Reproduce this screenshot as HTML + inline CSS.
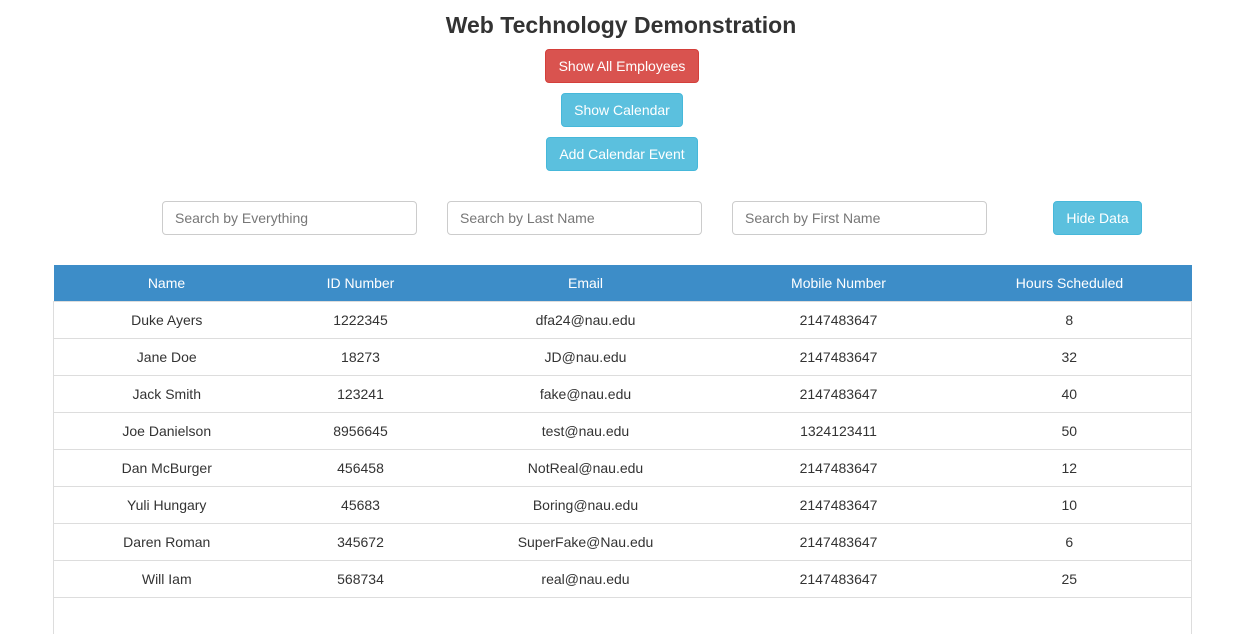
<!DOCTYPE html>
<html><head><style>
body{margin:0;background:#fff;font-family:"Liberation Sans",Arial,sans-serif;color:#333;width:1246px;height:602px;overflow:hidden;position:relative}
.a{position:absolute;box-sizing:border-box}
h1{position:absolute;left:0;width:1242px;text-align:center;top:12px;margin:0;font-size:23px;font-weight:bold;color:#333}
.btn{position:absolute;box-sizing:border-box;color:#fff;font-size:14px;text-align:center;border-radius:4px;line-height:33px}
.r{background:#d9534f;border:1px solid #d43f3a}
.b{background:#5bc0de;border:1px solid #46b8da}
.in{border:1px solid #ccc;border-radius:4px;height:34px;width:255px;top:201px;font-size:14px;color:#777;padding-left:12px;line-height:33px}
table{position:absolute;left:53px;top:265px;width:1138px;border-collapse:collapse;font-size:14px;table-layout:fixed}
th{background:#3d8dc8;color:#fff;font-weight:normal;height:36px;padding:0}
td{height:36px;padding:0;text-align:center;border-top:1px solid #ddd}
tbody{border-left:1px solid #ddd;border-right:1px solid #ddd}
</style></head><body>
<h1>Web Technology Demonstration</h1>
<div class="btn r" style="left:545px;top:49px;width:154px;height:34px">Show All Employees</div>
<div class="btn b" style="left:561px;top:93px;width:122px;height:34px">Show Calendar</div>
<div class="btn b" style="left:546px;top:137px;width:152px;height:34px">Add Calendar Event</div>
<div class="a in" style="left:162px">Search by Everything</div>
<div class="a in" style="left:447px">Search by Last Name</div>
<div class="a in" style="left:732px">Search by First Name</div>
<div class="btn b" style="left:1053px;top:201px;width:89px;height:34px">Hide Data</div>
<table>
<colgroup><col style="width:226px"><col style="width:162px"><col style="width:288px"><col style="width:218px"><col style="width:244px"></colgroup>
<thead><tr><th>Name</th><th>ID Number</th><th>Email</th><th>Mobile Number</th><th>Hours Scheduled</th></tr></thead>
<tbody>
<tr><td>Duke Ayers</td><td>1222345</td><td>dfa24@nau.edu</td><td>2147483647</td><td>8</td></tr>
<tr><td>Jane Doe</td><td>18273</td><td>JD@nau.edu</td><td>2147483647</td><td>32</td></tr>
<tr><td>Jack Smith</td><td>123241</td><td>fake@nau.edu</td><td>2147483647</td><td>40</td></tr>
<tr><td>Joe Danielson</td><td>8956645</td><td>test@nau.edu</td><td>1324123411</td><td>50</td></tr>
<tr><td>Dan McBurger</td><td>456458</td><td>NotReal@nau.edu</td><td>2147483647</td><td>12</td></tr>
<tr><td>Yuli Hungary</td><td>45683</td><td>Boring@nau.edu</td><td>2147483647</td><td>10</td></tr>
<tr><td>Daren Roman</td><td>345672</td><td>SuperFake@Nau.edu</td><td>2147483647</td><td>6</td></tr>
<tr><td>Will Iam</td><td>568734</td><td>real@nau.edu</td><td>2147483647</td><td>25</td></tr>
<tr><td>&nbsp;</td><td></td><td></td><td></td><td></td></tr>
</tbody></table>
</body></html>
